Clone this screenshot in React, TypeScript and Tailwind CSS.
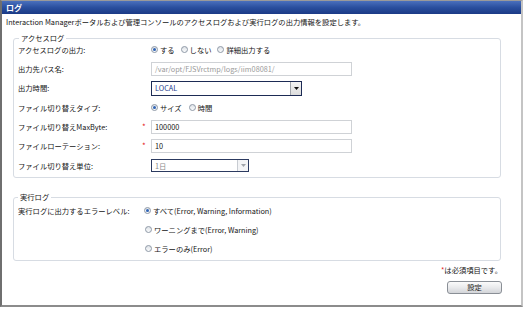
import type { ReactNode } from "react"

function Radio({ on }: { on?: boolean }) {
  return (
    <span className="inline-flex items-center justify-center w-[7px] h-[7px] rounded-full border border-[#8e99a6] bg-gradient-to-b from-[#dfe3e8] to-[#fafbfc] shrink-0">
      {on && <span className="w-[3px] h-[3px] rounded-full bg-[#2f63b5]" />}
    </span>
  )
}

function Opt({ on, children }: { on?: boolean; children: ReactNode }) {
  return (
    <span className="flex items-center mr-[6px]">
      <Radio on={on} />
      <span className="ml-[2px]">{children}</span>
    </span>
  )
}

function Row({ label, req, children }: { label: string; req?: boolean; children: ReactNode }) {
  return (
    <div className="flex items-center h-[19.33px]">
      <div className="w-[122px]">{label}</div>
      <div className="w-[11px] pl-[2px] text-[#e52020] text-[8px] leading-none">{req ? "*" : ""}</div>
      {children}
    </div>
  )
}

function Arrow({ muted }: { muted?: boolean }) {
  return (
    <span
      className={
        muted
          ? "flex items-center justify-center w-[11px] h-full border-l border-[#c8ccd2] bg-[#f3f4f6]"
          : "flex items-center justify-center w-[11px] h-full border-l border-[#a0a4aa] bg-gradient-to-b from-[#f4f4f4] to-[#dcdcdc]"
      }
    >
      <svg width="5" height="3" viewBox="0 0 5 3">
        <path d="M0 0h5L2.5 3z" fill={muted ? "#a0a4aa" : "#111"} />
      </svg>
    </span>
  )
}

export default function App() {
  return (
    <div className="w-[525px] h-[309px] bg-white text-[7.3px] leading-[10px] text-[#141414] font-['Noto_Sans_CJK_JP','Noto_Sans',sans-serif]">
      <div className="w-[523px] h-[307px] border-l-2 border-t border-r-2 border-b-2 border-l-[#6f6f6f] border-t-[#9a9a9a] border-r-[#c4c4c4] border-b-[#8c8c8c]">
        <div className="h-[13px] bg-gradient-to-b from-[#4a70bd] via-[#2a4f9e] to-[#1b3a86] text-white font-bold text-[8px] leading-[13px] pl-[4px]">
          ログ
        </div>
        <div className="pt-[3px] pl-[4px]">
          Interaction Managerポータルおよび管理コンソールのアクセスログおよび実行ログの出力情報を設定します。
        </div>

        <fieldset className="mt-[6px] ml-[11px] mr-[20px] border border-[#d7dce3] rounded-[3px] pl-[4px] pb-[2px]">
          <legend className="px-[2px] ml-[1px] leading-[10px]">アクセスログ</legend>
          <div className="-mt-[3px]">
            <Row label="アクセスログの出力:">
              <Opt on>する</Opt>
              <Opt>しない</Opt>
              <Opt>詳細出力する</Opt>
            </Row>
            <Row label="出力先パス名:">
              <div className="w-[201px] h-[14px] border border-[#cfd2d6] flex items-center pl-[3px] text-[#9a9a9a]">
                /var/opt/FJSVrctmp/logs/iim08081/
              </div>
            </Row>
            <Row label="出力時間:">
              <div className="w-[151px] h-[15px] border-[1.5px] border-[#1d2b55] flex items-center justify-between text-[#1a3a8c] bg-white">
                <span className="pl-[3px]">LOCAL</span>
                <Arrow />
              </div>
            </Row>
            <Row label="ファイル切り替えタイプ:">
              <span className="flex items-center mr-[7px]">
                <Radio on />
                <span className="ml-[2px]">サイズ</span>
              </span>
              <Opt>時間</Opt>
            </Row>
            <Row label="ファイル切り替えMaxByte:" req>
              <div className="w-[201px] h-[14px] border border-[#cfd2d6] flex items-center pl-[3px]">100000</div>
            </Row>
            <Row label="ファイルローテーション:" req>
              <div className="w-[201px] h-[14px] border border-[#cfd2d6] flex items-center pl-[3px]">10</div>
            </Row>
            <Row label="ファイル切り替え単位:">
              <div className="w-[98px] h-[13px] border-[1.5px] border-[#2b3a60] flex items-center justify-between text-[#8a8a8a] bg-white">
                <span className="pl-[3px]">1日</span>
                <Arrow muted />
              </div>
            </Row>
          </div>
        </fieldset>

        <fieldset className="mt-[14px] ml-[11px] mr-[20px] border border-[#d7dce3] rounded-[3px] pl-[3px] pb-[2px]">
          <legend className="px-[2px] ml-[1px] leading-[10px]">実行ログ</legend>
          <div className="-mt-[1px]">
            <div className="flex items-center h-[19px]">
              <div className="w-[127px] pl-[1px]">実行ログに出力するエラーレベル:</div>
              <Radio on />
              <span className="ml-[2px]">すべて(Error, Warning, Information)</span>
            </div>
            <div className="flex items-center h-[19px] pl-[128px]">
              <Radio />
              <span className="ml-[2px]">ワーニングまで(Error, Warning)</span>
            </div>
            <div className="flex items-center h-[19px] pl-[128px]">
              <Radio />
              <span className="ml-[2px]">エラーのみ(Error)</span>
            </div>
          </div>
        </fieldset>

        <div className="mt-[4px] mr-[19px] text-right">
          <span className="text-[#e52020]">*</span>は必須項目です。
        </div>
        <div className="mt-[6px] mr-[19px] flex justify-end">
          <button className="w-[55px] h-[13px] rounded-[3px] border border-[#8a8f96] bg-gradient-to-b from-[#fbfbfb] via-[#e9eaec] to-[#d3d5d9] text-[7.3px] leading-[11px] text-[#1c1c1c]">
            設定
          </button>
        </div>
      </div>
    </div>
  )
}
